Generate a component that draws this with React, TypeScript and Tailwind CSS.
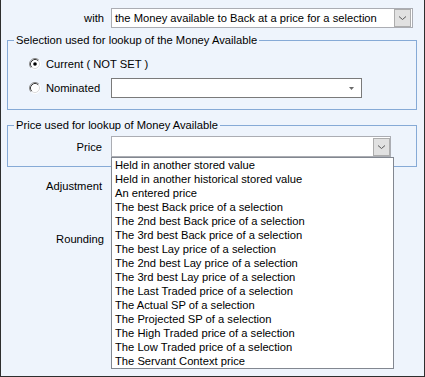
import React from 'react';

const priceOptions = [
  'Held in another stored value',
  'Held in another historical stored value',
  'An entered price',
  'The best Back price of a selection',
  'The 2nd best Back price of a selection',
  'The 3rd best Back price of a selection',
  'The best Lay price of a selection',
  'The 2nd best Lay price of a selection',
  'The 3rd best Lay price of a selection',
  'The Last Traded price of a selection',
  'The Actual SP of a selection',
  'The Projected SP of a selection',
  'The High Traded price of a selection',
  'The Low Traded price of a selection',
  'The Servant Context price',
];

const DropButton: React.FC = () => (
  <div className="w-[17px] h-[18px] shrink-0 bg-[#e1e1e1] border border-[#adadad] flex items-center justify-center">
    <svg width="9" height="6" viewBox="0 0 9 6">
      <path d="M1 1.5 L4.5 4.5 L8 1.5" fill="none" stroke="#5a5a5a" strokeWidth="1" />
    </svg>
  </div>
);

const Radio: React.FC<{ checked?: boolean }> = ({ checked }) => (
  <svg width="12" height="12" viewBox="0 0 12 12" className="shrink-0">
    <circle cx="6" cy="6" r="5" fill="#ffffff" />
    <path d="M2.11 9.89 A5.5 5.5 0 0 1 9.89 2.11" fill="none" stroke="#8a8a8a" />
    <path d="M9.89 2.11 A5.5 5.5 0 0 1 2.11 9.89" fill="none" stroke="#ffffff" />
    <path d="M2.82 9.18 A4.5 4.5 0 0 1 9.18 2.82" fill="none" stroke="#3c3c3c" />
    <path d="M9.18 2.82 A4.5 4.5 0 0 1 2.82 9.18" fill="none" stroke="#dcdcdc" />
    {checked && <circle cx="6" cy="6" r="1.8" fill="#000000" />}
  </svg>
);

export default function App() {
  return (
    <div className="w-[425px] h-[377px] bg-[#eef4fc] border-l border-r border-b border-[#2e2e2e] text-[11.2px] leading-[14px] text-black font-['Liberation_Sans',Arial,sans-serif]">
      {/* with row */}
      <div className="flex items-center pt-[8px]">
        <div className="w-[103px] text-right">with</div>
        <div className="ml-[7px] w-[302px] h-[20px] bg-white border border-[#abadb3] flex items-center pl-[3px] pr-[1px]">
          <span className="flex-1 whitespace-nowrap">the Money available to Back at a price for a selection</span>
          <DropButton />
        </div>
      </div>

      {/* selection group */}
      <fieldset className="ml-[6px] mt-[5px] w-[410px] h-[77px] border border-[#86aad6]">
        <legend className="ml-[6px] px-[2px] leading-[14px]">Selection used for lookup of the Money Available</legend>
        <div className="mt-[9px] h-[16px] flex items-center pl-[21px]">
          <Radio checked />
          <span className="ml-[5px]">Current ( NOT SET )</span>
        </div>
        <div className="mt-[6px] h-[20px] flex items-center pl-[21px]">
          <Radio />
          <span className="w-[70px] pl-[5px]">Nominated</span>
          <div className="w-[251px] h-[20px] bg-white border border-[#7a7a7a] flex items-center justify-end pr-[7px]">
            <svg width="5" height="3" viewBox="0 0 5 3">
              <path d="M0 0 L5 0 L2.5 3 Z" fill="#6a6a6a" />
            </svg>
          </div>
        </div>
      </fieldset>

      {/* price group */}
      <fieldset className="ml-[6px] mt-[8px] w-[410px] h-[49px] border border-[#86aad6]">
        <legend className="ml-[6px] px-[2px] leading-[14px]">Price used for lookup of Money Available</legend>
        <div className="mt-[4px] flex items-center">
          <div className="w-[94px] text-right">Price</div>
          <div className="relative ml-[9px] w-[280px] h-[21px] bg-white border border-[#abadb3] flex items-center justify-end">
            <DropButton />
            <div className="absolute left-[-1px] top-[20px] z-10 w-[283px] bg-white border border-[#828790]">
              {priceOptions.map((opt) => (
                <div key={opt} className="h-[14px] pl-[3px] whitespace-nowrap">
                  {opt}
                </div>
              ))}
            </div>
          </div>
        </div>
      </fieldset>

      <div className="mt-[12px] flex">
        <div className="w-[101px] text-right">Adjustment</div>
      </div>
      <div className="mt-[39px] flex">
        <div className="w-[103px] text-right">Rounding</div>
      </div>
    </div>
  );
}
